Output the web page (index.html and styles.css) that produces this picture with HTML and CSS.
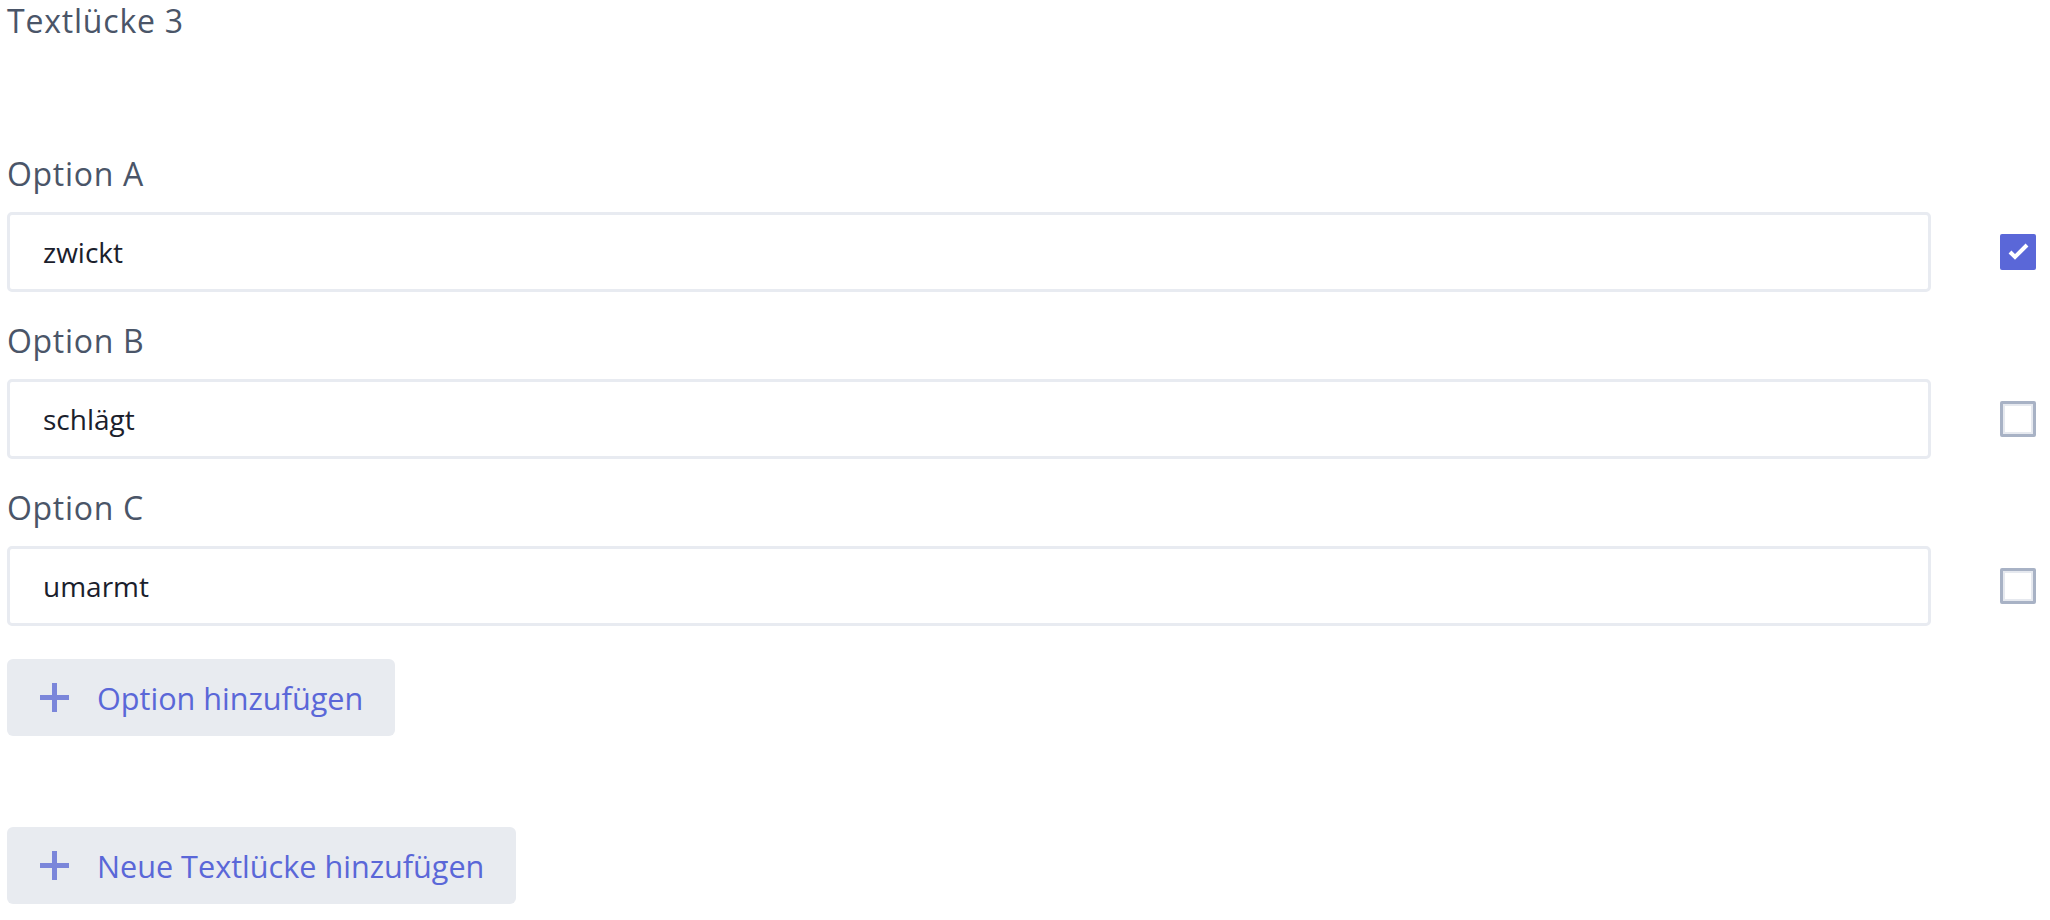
FILE: index.html
```html
<!DOCTYPE html>
<html>
<head>
<meta charset="utf-8">
<title>Textlücke 3</title>
<link rel="stylesheet" href="styles.css">
</head>
<body>

<h3 class="gap-title">Textlücke 3</h3>

<div class="options">
	<div class="option">
		<label class="option-label">Option A</label>
		<div class="option-row">
			<input class="option-field" type="text" value="zwickt">
			<span class="check checked">
				<svg viewBox="0 0 36 36" width="36" height="36"><polyline points="10,18 15,23 27,11" fill="none" stroke="#fff" stroke-width="4"/></svg>
			</span>
		</div>
	</div>
	<div class="option">
		<label class="option-label">Option B</label>
		<div class="option-row">
			<input class="option-field" type="text" value="schlägt">
			<span class="check"></span>
		</div>
	</div>
	<div class="option">
		<label class="option-label">Option C</label>
		<div class="option-row">
			<input class="option-field" type="text" value="umarmt">
			<span class="check"></span>
		</div>
	</div>
</div>

<button class="add-btn add-option">
	<svg viewBox="0 0 29 29" width="29" height="29"><path d="M14.5 0v29M0 14.5h29" stroke="#7b86da" stroke-width="5"/></svg>
	<span>Option hinzufügen</span>
</button>

<button class="add-btn add-gap">
	<svg viewBox="0 0 29 29" width="29" height="29"><path d="M14.5 0v29M0 14.5h29" stroke="#7b86da" stroke-width="5"/></svg>
	<span>Neue Textlücke hinzufügen</span>
</button>

</body>
</html>
```

FILE: styles.css
```css
body {
	margin : 0;
	padding : 0 7px;
	background-color : #fff;
	font-family : "Open Sans", sans-serif;
}

.gap-title {
	margin : 0;
	padding-top : 1px;
	font-size : 32px;
	font-weight : normal;
	line-height : 40px;
	letter-spacing : 0.8px;
	color : #4a5568;
}

.options {
	margin-top : 110px;
}

.option {
	margin-bottom : 26px;
}

.option-label {
	display : block;
	margin-bottom : 16px;
	font-size : 32px;
	line-height : 45px;
	letter-spacing : 0.7px;
	color : #4a5568;
}

.option-row {
	display : flex;
	align-items : center;
}

.option-field {
	flex : 1;
	box-sizing : border-box;
	height : 80px;
	margin : 0;
	padding : 0 33px;
	border : 3px solid #e8ebf1;
	border-radius : 5px;
	font-family : "Open Sans", sans-serif;
	font-size : 28px;
	color : #1a202c;
	outline : none;
}

.check {
	box-sizing : border-box;
	width : 36px;
	height : 36px;
	margin : 0 7px 0 69px;
	border : 3px solid #a8b2c5;
	border-radius : 2px;
	box-shadow : inset 0 0 0 2px #e6e9ef;
	background-color : #fff;
}

.check.checked {
	border : none;
	box-shadow : none;
	background-color : #5a67d8;
}

.check svg {
	display : block;
}

.add-btn {
	display : flex;
	align-items : center;
	gap : 28px;
	height : 77px;
	padding : 0 32px 0 33px;
	border : none;
	border-radius : 6px;
	background-color : #e8ebf0;
	font-family : "Open Sans", sans-serif;
	font-size : 30.6px;
	color : #5a67d8;
	cursor : pointer;
}

.add-option {
	margin-top : 33px;
}

.add-gap {
	margin-top : 91px;
}

.add-btn svg {
	display : block;
}
```
